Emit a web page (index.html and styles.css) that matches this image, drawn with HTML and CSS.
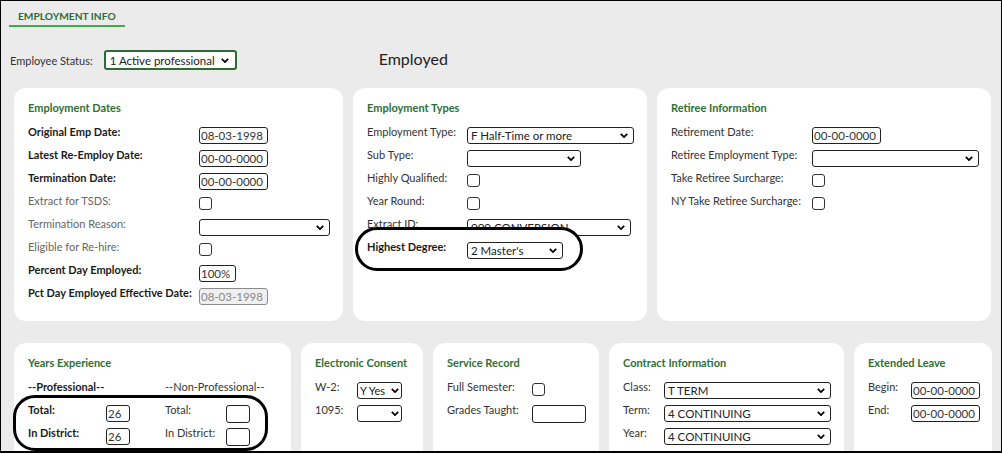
FILE: index.html
```html
<!DOCTYPE html>
<html>
<head>
<meta charset="utf-8">
<title>Employment Info</title>
<link rel="stylesheet" href="styles.css">
</head>
<body>
<div class="frame">
  <div class="tabbar"><span class="tab">EMPLOYMENT INFO</span></div>

  <div class="status">
    <span class="status-label">Employee Status:</span>
    <div class="sel sel-status"><span>1 Active professional</span><svg class="chev" viewBox="0 0 10 6"><path d="M1 1L5 5L9 1"/></svg></div>
    <span class="employed">Employed</span>
  </div>

  <div class="row1">
    <section class="card">
      <h3 class="card-title">Employment Dates</h3>
      <div class="form f-dates">
        <label class="b">Original Emp Date:</label><input class="inp w69" value="08-03-1998">
        <label class="b">Latest Re-Employ Date:</label><input class="inp w69" value="00-00-0000">
        <label class="b">Termination Date:</label><input class="inp w69" value="00-00-0000">
        <label class="m">Extract for TSDS:</label><input type="checkbox" class="cb">
        <label class="m">Termination Reason:</label><div class="sel w131"><span></span><svg class="chev" viewBox="0 0 10 6"><path d="M1 1L5 5L9 1"/></svg></div>
        <label class="m">Eligible for Re-hire:</label><input type="checkbox" class="cb">
        <label class="b">Percent Day Employed:</label><input class="inp w37" value="100%">
        <label class="b">Pct Day Employed Effective Date:</label><input class="inp w69 dis" value="08-03-1998" disabled>
      </div>
    </section>

    <section class="card">
      <h3 class="card-title">Employment Types</h3>
      <div class="form f-types">
        <label>Employment Type:</label><div class="sel w167"><span>F Half-Time or more</span><svg class="chev" viewBox="0 0 10 6"><path d="M1 1L5 5L9 1"/></svg></div>
        <label>Sub Type:</label><div class="sel w114"><span></span><svg class="chev" viewBox="0 0 10 6"><path d="M1 1L5 5L9 1"/></svg></div>
        <label>Highly Qualified:</label><input type="checkbox" class="cb">
        <label>Year Round:</label><input type="checkbox" class="cb">
        <label>Extract ID:</label><div class="sel w164"><span>000 CONVERSION</span><svg class="chev" viewBox="0 0 10 6"><path d="M1 1L5 5L9 1"/></svg></div>
        <label class="b over">Highest Degree:</label><div class="sel w96 over"><span>2 Master's</span><svg class="chev" viewBox="0 0 10 6"><path d="M1 1L5 5L9 1"/></svg></div>
      </div>
      <div class="mark mark-degree"></div>
    </section>

    <section class="card">
      <h3 class="card-title">Retiree Information</h3>
      <div class="form f-ret">
        <label>Retirement Date:</label><input class="inp w69" value="00-00-0000">
        <label>Retiree Employment Type:</label><div class="sel w167"><span></span><svg class="chev" viewBox="0 0 10 6"><path d="M1 1L5 5L9 1"/></svg></div>
        <label>Take Retiree Surcharge:</label><input type="checkbox" class="cb">
        <label>NY Take Retiree Surcharge:</label><input type="checkbox" class="cb">
      </div>
    </section>
  </div>

  <div class="row2">
    <section class="card">
      <h3 class="card-title">Years Experience</h3>
      <div class="form f-years">
        <label class="b span2">--Professional--</label><label class="span2">--Non-Professional--</label>
        <label class="b">Total:</label><input class="inp w24" value="26"><label>Total:</label><input class="inp w24 tall" value="">
        <label class="b">In District:</label><input class="inp w24" value="26"><label>In District:</label><input class="inp w24 tall" value="">
      </div>
      <div class="mark mark-years"></div>
    </section>

    <section class="card">
      <h3 class="card-title">Electronic Consent</h3>
      <div class="form f-consent">
        <label>W-2:</label><div class="sel w45 tight"><span>Y Yes</span><svg class="chev" viewBox="0 0 10 6"><path d="M1 1L5 5L9 1"/></svg></div>
        <label>1095:</label><div class="sel w45 tight tall"><span></span><svg class="chev" viewBox="0 0 10 6"><path d="M1 1L5 5L9 1"/></svg></div>
      </div>
    </section>

    <section class="card">
      <h3 class="card-title">Service Record</h3>
      <div class="form f-service">
        <label>Full Semester:</label><input type="checkbox" class="cb">
        <label>Grades Taught:</label><input class="inp w54 tall" value="">
      </div>
    </section>

    <section class="card">
      <h3 class="card-title">Contract Information</h3>
      <div class="form f-contract">
        <label>Class:</label><div class="sel w167"><span>T TERM</span><svg class="chev" viewBox="0 0 10 6"><path d="M1 1L5 5L9 1"/></svg></div>
        <label>Term:</label><div class="sel w167"><span>4 CONTINUING</span><svg class="chev" viewBox="0 0 10 6"><path d="M1 1L5 5L9 1"/></svg></div>
        <label>Year:</label><div class="sel w167"><span>4 CONTINUING</span><svg class="chev" viewBox="0 0 10 6"><path d="M1 1L5 5L9 1"/></svg></div>
      </div>
    </section>

    <section class="card">
      <h3 class="card-title">Extended Leave</h3>
      <div class="form f-leave">
        <label>Begin:</label><input class="inp w69" value="00-00-0000">
        <label>End:</label><input class="inp w69" value="00-00-0000">
      </div>
    </section>
  </div>
</div>
</body>
</html>
```

FILE: styles.css
```css
* { box-sizing: border-box; }
html, body { margin: 0; padding: 0; background: #fff; }
body {
  font-family: Lato, "Open Sans", "Liberation Sans", sans-serif;
  font-size: 11px;
  color: #333;
}

.frame {
  width: 1002px;
  height: 453px;
  border: 1px solid #000;
  border-bottom-width: 2px;
  background: #ebebeb;
  overflow: hidden;
}

/* tab */
.tabbar { padding-left: 8px; }
.tab {
  display: inline-block;
  padding: 9px 9px 2px;
  line-height: 13px;
  font-size: 10.2px;
  font-weight: 700;
  color: #2e6b34;
  border-bottom: 2px solid #3fae49;
}

/* status row */
.status {
  display: flex;
  align-items: center;
  height: 20px;
  margin-top: 23px;
  padding-left: 9px;
}
.status-label { color: #333; }
.sel.sel-status {
  width: 133px;
  height: 20px;
  margin: 0 0 0 11px;
  border: 2px solid #2e6b34;
  padding: 0 6px 0 4px;
}
.employed {
  margin-left: 142px;
  margin-bottom: 4px;
  font-size: 16px;
  color: #222;
}

/* card rows */
.row1 {
  display: grid;
  grid-template-columns: 329px 294px 334px;
  column-gap: 10px;
  height: 233px;
  margin-top: 18px;
  padding-left: 13px;
}
.row2 {
  display: grid;
  grid-template-columns: 277px 122px 166px 235px 138px;
  column-gap: 10px;
  height: 150px;
  margin-top: 22px;
  padding-left: 13px;
}
.card {
  position: relative;
  background: #fff;
  border-radius: 12px;
  padding: 13px 0 0 14px;
}
.card-title {
  margin: 0 0 10px;
  font-size: 11px;
  line-height: 14px;
  font-weight: 700;
  color: #2e7034;
}

/* forms */
.form {
  display: grid;
  grid-auto-rows: 23px;
  align-items: start;
  justify-items: start;
}
.form label { line-height: 14px; white-space: nowrap; }
.f-dates { grid-template-columns: 171px auto; }
.f-types { grid-template-columns: 100px auto; }
.f-ret { grid-template-columns: 141px auto; }
.f-years { grid-template-columns: 78px 59px 61px auto; }
.f-consent { grid-template-columns: 42px auto; }
.f-service { grid-template-columns: 85px auto; }
.f-contract { grid-template-columns: 41px auto; }
.f-leave { grid-template-columns: 43px auto; }
.span2 { grid-column: span 2; }

.b { font-weight: 700; color: #1a1a1a; }
.m { color: #666; }

.inp {
  height: 17px;
  margin: 2px 0 0;
  border: 1px solid #222;
  border-radius: 3px;
  padding: 0 1px;
  font-family: Lato, "Open Sans", sans-serif;
  font-size: 11.5px;
  color: #333;
  background: #fff;
  outline: none;
}
.inp.dis {
  background: #efefef;
  border-color: #8a8a8a;
  color: #888;
}
.tall { height: 18px; }

.cb {
  appearance: none;
  -webkit-appearance: none;
  width: 13px;
  height: 13px;
  margin: 3px 0 0;
  border: 1px solid #333;
  border-radius: 3px;
  background: #fff;
}

.sel {
  display: flex;
  align-items: center;
  justify-content: space-between;
  height: 17px;
  margin-top: 2px;
  border: 1px solid #222;
  border-radius: 3px;
  padding: 0 5px 0 3px;
  font-size: 11.5px;
  color: #222;
  background: #fff;
  white-space: nowrap;
  overflow: hidden;
}
.sel.tight { padding: 0 2px 0 2px; font-size: 11px; }
.chev {
  flex: none;
  width: 8px;
  height: 5px;
  fill: none;
  stroke: #000;
  stroke-width: 2.2;
}

.w24 { width: 24px; }
.w37 { width: 37px; }
.w45 { width: 45px; }
.w54 { width: 54px; }
.w69 { width: 69px; }
.w96 { width: 96px; }
.w114 { width: 114px; }
.w131 { width: 131px; }
.w164 { width: 164px; }
.w167 { width: 167px; }

/* annotation marks */
.mark {
  position: absolute;
  border: 3px solid #000;
  border-radius: 22px;
  pointer-events: none;
}
.mark-degree {
  left: 2px;
  top: 139px;
  width: 228px;
  height: 44px;
  background: #fff;
  z-index: 1;
}
.over { position: relative; z-index: 2; }
.mark-years {
  left: -1px;
  top: 52px;
  width: 255px;
  height: 56px;
}
```
